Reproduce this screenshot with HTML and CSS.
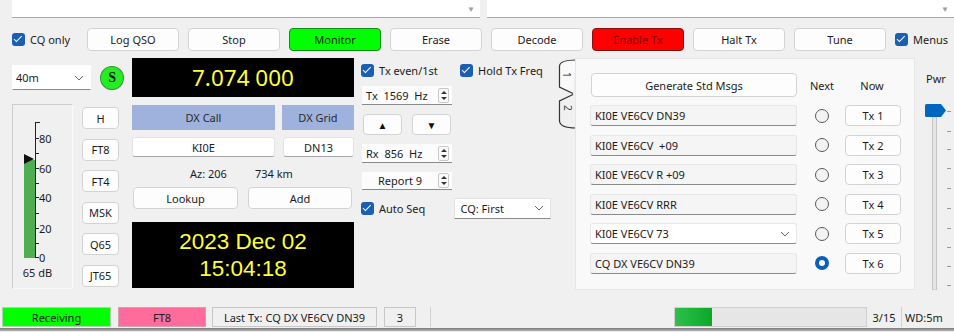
FILE: index.html
```html
<!DOCTYPE html>
<html lang="en">
  <head>
    <meta charset="utf-8" />
    <title>WSJT-X</title>
    <link rel="stylesheet" href="styles.css">
  </head>
  <body>
    <div class="panes">
      <div class="pane pane-left"><span class="scroll-arrow">&#9660;</span></div>
      <div class="pane pane-right"><span class="scroll-arrow">&#9660;</span></div>
    </div>

    <div class="toolbar">
      <label class="check cq-only"><span class="box"></span>CQ only</label>
      <button class="btn">Log QSO</button>
      <button class="btn">Stop</button>
      <button class="btn monitor">Monitor</button>
      <button class="btn">Erase</button>
      <button class="btn">Decode</button>
      <button class="btn enable-tx">Enable Tx</button>
      <button class="btn">Halt Tx</button>
      <button class="btn">Tune</button>
      <label class="check menus"><span class="box"></span>Menus</label>
    </div>

    <div class="main">
      <div class="left">
        <div class="band-row">
          <div class="combo band">40m
            <svg class="chev" width="10" height="6" viewBox="0 0 10 6"><polyline points="1,1 5,5 9,1" fill="none" stroke="#666" stroke-width="1"/></svg>
          </div>
          <div class="s-light">S</div>
        </div>
        <div class="meter-row">
          <div class="meter">
            <svg width="59" height="183" viewBox="0 0 59 183">
              <rect x="11" y="55" width="11" height="98" fill="#4fae52"/>
              <polygon points="11,49 21,54 11,59" fill="#111"/>
              <g stroke="#222" stroke-width="1">
                <line x1="22.5" y1="17" x2="22.5" y2="153"/>
                <line x1="22" y1="17.5" x2="27" y2="17.5"/>
                <line x1="22" y1="33.5" x2="26" y2="33.5"/>
                <line x1="22" y1="48.5" x2="26" y2="48.5"/>
                <line x1="22" y1="63.5" x2="26" y2="63.5"/>
                <line x1="22" y1="78.5" x2="26" y2="78.5"/>
                <line x1="22" y1="92.5" x2="26" y2="92.5"/>
                <line x1="22" y1="108.5" x2="26" y2="108.5"/>
                <line x1="22" y1="123.5" x2="26" y2="123.5"/>
                <line x1="22" y1="138.5" x2="26" y2="138.5"/>
                <line x1="22" y1="152.5" x2="26" y2="152.5"/>
              </g>
              <g class="scale-text">
                <text x="26" y="37.5">80</text>
                <text x="26" y="67.5">60</text>
                <text x="26" y="96.5">40</text>
                <text x="26" y="127.5">20</text>
                <text x="26" y="157">0</text>
                <text x="24.5" y="172" text-anchor="middle">65 dB</text>
              </g>
            </svg>
          </div>
          <div class="modes">
            <button class="btn mode">H</button>
            <button class="btn mode">FT8</button>
            <button class="btn mode">FT4</button>
            <button class="btn mode">MSK</button>
            <button class="btn mode">Q65</button>
            <button class="btn mode">JT65</button>
          </div>
        </div>
      </div>

      <div class="dx">
        <div class="freq">7.074 000</div>
        <div class="dx-head">
          <div class="dx-call">DX Call</div>
          <div class="dx-grid">DX Grid</div>
        </div>
        <div class="dx-vals">
          <div class="entry call">KI0E</div>
          <div class="entry grid">DN13</div>
        </div>
        <div class="azdist"><span>Az: 206</span><span>734 km</span></div>
        <div class="dx-btns">
          <button class="btn lookup">Lookup</button>
          <button class="btn add">Add</button>
        </div>
        <div class="clock">
          <div class="clock-line">2023 Dec 02</div>
          <div class="clock-line">15:04:18</div>
        </div>
      </div>

      <div class="mid">
        <div class="mid-checks">
          <label class="check tx-even"><span class="box"></span>Tx even/1st</label>
          <label class="check"><span class="box"></span>Hold Tx Freq</label>
        </div>
        <div class="spin tx-spin"><span class="spin-text">Tx&nbsp; 1569&nbsp; Hz</span><span class="spin-btn"></span></div>
        <div class="arrows">
          <button class="btn arrow">&#9650;</button>
          <button class="btn arrow">&#9660;</button>
        </div>
        <div class="spin rx-spin"><span class="spin-text">Rx&nbsp; 856&nbsp; Hz</span><span class="spin-btn"></span></div>
        <div class="spin report"><span class="spin-text centered">Report 9</span><span class="spin-btn"></span></div>
        <div class="auto-row">
          <label class="check auto-seq"><span class="box"></span>Auto Seq</label>
          <div class="combo cq-first">CQ: First
            <svg class="chev" width="10" height="6" viewBox="0 0 10 6"><polyline points="1,1 5,5 9,1" fill="none" stroke="#666" stroke-width="1"/></svg>
          </div>
        </div>
      </div>

      <div class="tabs">
        <svg width="20" height="72" viewBox="0 0 20 72">
          <path d="M20,2 Q4,2 3.5,8 L3.5,29 L17,35.5" fill="#f9f9f9" stroke="#333" stroke-width="1.2"/>
          <path d="M17,36.5 L3.5,43 L3.5,63 Q4,70 20,70" fill="none" stroke="#333" stroke-width="1.2"/>
          <text x="7" y="14" transform="rotate(90 7 14)" class="tab-text">1</text>
          <text x="8" y="47" transform="rotate(90 8 47)" class="tab-text dim">2</text>
        </svg>
      </div>

      <div class="panel">
        <div class="msg-head">
          <button class="btn gen">Generate Std Msgs</button>
          <span class="col-next">Next</span>
          <span class="col-now">Now</span>
        </div>
        <div class="msg-row">
          <div class="entry msg">KI0E VE6CV DN39</div>
          <span class="radio"></span>
          <button class="btn tx">Tx 1</button>
        </div>
        <div class="msg-row">
          <div class="entry msg">KI0E VE6CV&nbsp; +09</div>
          <span class="radio"></span>
          <button class="btn tx">Tx 2</button>
        </div>
        <div class="msg-row">
          <div class="entry msg">KI0E VE6CV R +09</div>
          <span class="radio"></span>
          <button class="btn tx">Tx 3</button>
        </div>
        <div class="msg-row">
          <div class="entry msg">KI0E VE6CV RRR</div>
          <span class="radio"></span>
          <button class="btn tx">Tx 4</button>
        </div>
        <div class="msg-row">
          <div class="entry msg msg-combo">KI0E VE6CV 73
            <svg class="chev" width="10" height="6" viewBox="0 0 10 6"><polyline points="1,1 5,5 9,1" fill="none" stroke="#666" stroke-width="1"/></svg>
          </div>
          <span class="radio"></span>
          <button class="btn tx">Tx 5</button>
        </div>
        <div class="msg-row">
          <div class="entry msg">CQ DX VE6CV DN39</div>
          <span class="radio on"></span>
          <button class="btn tx">Tx 6</button>
        </div>
      </div>

      <div class="pwr">
        <span class="pwr-label">Pwr</span>
        <svg width="39" height="204" viewBox="0 0 39 204">
          <rect x="17.5" y="31" width="4" height="173" fill="#e6e6e6" stroke="#c4c4c4" stroke-width="1"/>
          <g stroke="#9a9a9a" stroke-width="1">
            <line x1="32" y1="25.5" x2="36" y2="25.5"/>
            <line x1="32" y1="45.5" x2="36" y2="45.5"/>
            <line x1="32" y1="63.5" x2="36" y2="63.5"/>
            <line x1="32" y1="82.5" x2="36" y2="82.5"/>
            <line x1="32" y1="102.5" x2="36" y2="102.5"/>
            <line x1="32" y1="122.5" x2="36" y2="122.5"/>
            <line x1="32" y1="142.5" x2="36" y2="142.5"/>
            <line x1="32" y1="161.5" x2="36" y2="161.5"/>
            <line x1="32" y1="180.5" x2="36" y2="180.5"/>
            <line x1="32" y1="199.5" x2="36" y2="199.5"/>
          </g>
          <path d="M10,19.5 Q10,18 11.5,18 L26,18 L31,24.5 L26,31 L11.5,31 Q10,31 10,29.5 Z" fill="#0067c0"/>
        </svg>
      </div>
    </div>

    <div class="status">
      <div class="cell receiving">Receiving</div>
      <div class="cell mode-cell">FT8</div>
      <div class="cell sunken last-tx">Last Tx: CQ DX VE6CV DN39</div>
      <div class="cell sunken count">3</div>
      <div class="sep"></div>
      <div class="spacer"></div>
      <div class="progress"><div class="progress-fill"></div></div>
      <div class="cell plain period">3/15</div>
      <div class="sep"></div>
      <div class="cell plain wd">WD:5m</div>
    </div>
    <div class="bottom-line"></div>
  </body>
</html>
```

FILE: styles.css
```css
body {
  margin: 0;
  width: 954px;
  height: 332px;
  overflow: hidden;
  background: #f0f0f0;
  font-family: "Noto Sans", "Open Sans", sans-serif;
  font-size: 11px;
  color: #1b1b1b;
}

button {
  font-family: inherit;
  font-size: 11px;
  color: #1b1b1b;
  padding: 0;
}

/* top decode panes */
.panes {
  display: flex;
  height: 18px;
  padding-left: 12px;
  gap: 7px;
}

.pane {
  display: flex;
  justify-content: flex-end;
  align-items: center;
  background: #fff;
  border-bottom: 1px solid #a8a8a8;
  box-sizing: border-box;
}

.pane-left {
  width: 468px;
}

.pane-right {
  flex: 1;
}

.scroll-arrow {
  font-size: 8px;
  color: #a0a0a0;
  padding-right: 5px;
}

/* generic widgets */
.btn {
  background: #fdfdfd;
  border: 1px solid #d3d3d3;
  border-radius: 4px;
  box-sizing: border-box;
}

.check {
  display: flex;
  align-items: center;
  gap: 5px;
  white-space: nowrap;
}

.box {
  position: relative;
  width: 13px;
  height: 13px;
  border-radius: 3px;
  background: #1a5fb4;
  flex: none;
}

.box::after {
  content: "";
  position: absolute;
  left: 4px;
  top: 1.5px;
  width: 3px;
  height: 6.5px;
  border: solid #fff;
  border-width: 0 1.5px 1.5px 0;
  transform: rotate(45deg);
}

.combo {
  display: flex;
  align-items: center;
  justify-content: space-between;
  background: #fff;
  border: 1px solid #e2e2e2;
  border-bottom-color: #8a8a8a;
  box-sizing: border-box;
  padding: 0 6px 0 4px;
}

.entry {
  display: flex;
  align-items: center;
  background: #fff;
  border: 1px solid #e4e4e4;
  border-bottom-color: #a8a8a8;
  border-radius: 3px;
  box-sizing: border-box;
}

/* toolbar */
.toolbar {
  display: flex;
  align-items: center;
  height: 24px;
  margin-top: 9px;
  padding-left: 12px;
  gap: 9px;
}

.cq-only {
  width: 66px;
}

.toolbar .btn {
  width: 92px;
  height: 23px;
}

.toolbar .monitor {
  background: #00ff00;
  border-color: #188a18;
}

.toolbar .enable-tx {
  background: #ff0000;
  border-color: #8a1010;
  color: #8a0000;
}

/* main area */
.main {
  display: flex;
  align-items: flex-start;
  height: 232px;
  margin-top: 7px;
  padding-left: 12px;
}

.left {
  width: 112px;
  margin-right: 8px;
}

.band-row {
  display: flex;
  align-items: center;
  margin-top: 7px;
  height: 25px;
}

.band {
  width: 80px;
  height: 25px;
  border-color: #fff;
  border-bottom-color: #8a8a8a;
  padding-left: 3px;
}

.s-light {
  display: flex;
  align-items: center;
  justify-content: center;
  width: 24px;
  height: 24px;
  margin-left: 9px;
  border-radius: 50%;
  background: #22ee22;
  border: 1px solid #3b8f3b;
  box-sizing: border-box;
  font-family: "Liberation Serif", serif;
  font-weight: bold;
  font-size: 14px;
  color: #111;
}

.meter-row {
  display: flex;
  margin-top: 14px;
}

.meter {
  width: 61px;
  height: 185px;
  border: 1px solid #cdcdcd;
  border-right-color: #fafafa;
  border-bottom-color: #fafafa;
  box-sizing: border-box;
}

.meter svg {
  display: block;
}

.scale-text text {
  font-family: "Noto Sans", sans-serif;
  font-size: 11px;
  fill: #1b1b1b;
}

.modes {
  display: flex;
  flex-direction: column;
  gap: 9.6px;
  margin-left: 9px;
  margin-top: 3px;
}

.mode {
  width: 37px;
  height: 22px;
}

/* dx column */
.dx {
  display: flex;
  flex-direction: column;
  width: 222px;
  margin-right: 7px;
}

.freq {
  display: flex;
  align-items: center;
  justify-content: center;
  height: 39px;
  background: #000;
  color: #ffff3c;
  font-size: 22.5px;
}

.dx-head {
  display: flex;
  gap: 7px;
  margin-top: 8px;
  height: 25px;
}

.dx-head div {
  display: flex;
  align-items: center;
  justify-content: center;
  background: #9fb2dd;
  color: #2a2a2a;
}

.dx-call {
  width: 143px;
}

.dx-grid {
  flex: 1;
}

.dx-vals {
  display: flex;
  gap: 8px;
  margin-top: 7px;
  height: 20px;
}

.dx-vals .entry {
  justify-content: center;
}

.call {
  width: 143px;
}

.grid {
  flex: 1;
}

.azdist {
  display: flex;
  gap: 28px;
  height: 16px;
  margin-top: 8px;
  padding-left: 58px;
  align-items: center;
}

.dx-btns {
  display: flex;
  gap: 10px;
  margin-top: 6px;
  margin-left: 1px;
  height: 22px;
}

.lookup {
  width: 105px;
}

.add {
  width: 104px;
}

.clock {
  display: flex;
  flex-direction: column;
  align-items: center;
  height: 66px;
  margin-top: 13px;
  padding-top: 6px;
  background: #000;
  color: #ffff3c;
  font-family: "Liberation Sans", sans-serif;
  font-size: 22.5px;
  box-sizing: border-box;
}

.clock-line {
  height: 27px;
  line-height: 27px;
}

/* middle controls */
.mid {
  display: flex;
  flex-direction: column;
  width: 190px;
  margin-right: 5px;
}

.mid-checks {
  display: flex;
  margin-top: 5px;
  height: 14px;
}

.tx-even {
  width: 99px;
}

.spin {
  display: flex;
  align-items: center;
  width: 90px;
  height: 19px;
  margin-left: 1px;
  background: #fcfcfc;
  border-bottom: 1px solid #8a8a8a;
  box-sizing: border-box;
}

.spin-text {
  flex: 1;
  padding-left: 4px;
}

.spin-text.centered {
  text-align: center;
  padding-left: 0;
}

.spin-btn {
  position: relative;
  width: 11px;
  height: 15px;
  margin-right: 3px;
  border: 1px solid #c8c8c8;
  border-radius: 2px;
  box-sizing: border-box;
  background: #fafafa;
}

.spin-btn::before,
.spin-btn::after {
  content: "";
  position: absolute;
  left: 2px;
  border-left: 3px solid transparent;
  border-right: 3px solid transparent;
}

.spin-btn::before {
  top: 2px;
  border-bottom: 3px solid #333;
}

.spin-btn::after {
  bottom: 2px;
  border-top: 3px solid #333;
}

.tx-spin {
  margin-top: 9px;
}

.arrows {
  display: flex;
  gap: 10px;
  margin-top: 9px;
  margin-left: 2px;
}

.arrow {
  width: 39px;
  height: 21px;
  font-size: 10px;
  color: #111;
}

.rx-spin {
  margin-top: 9px;
}

.report {
  margin-top: 9px;
  height: 18px;
}

.auto-row {
  display: flex;
  align-items: center;
  margin-top: 7px;
  height: 22px;
}

.auto-seq {
  width: 94px;
}

.cq-first {
  width: 97px;
  height: 21px;
  padding-left: 5px;
}

/* tab widget */
.tabs {
  width: 19px;
}

.tabs svg {
  display: block;
}

.tab-text {
  font-family: "Noto Sans", sans-serif;
  font-size: 10px;
  fill: #222;
}

.tab-text.dim {
  fill: #444;
}

.panel {
  width: 340px;
  height: 232px;
  background: #f9f9f9;
  border: 1px solid #e6e6e6;
  box-sizing: border-box;
  padding: 14px 0 0 14px;
}

.msg-head {
  display: flex;
  align-items: center;
  height: 24px;
  margin-left: 1px;
}

.gen {
  width: 206px;
  height: 24px;
}

.col-next {
  width: 50px;
  text-align: center;
}

.col-now {
  width: 50px;
  text-align: center;
}

.msg-row {
  display: flex;
  align-items: center;
  height: 21px;
  margin-top: 8.6px;
}

.msg-head + .msg-row {
  margin-top: 8px;
}

.msg {
  width: 207px;
  height: 21px;
  background: #f5f5f5;
  border-radius: 3px;
  border-color: #e6e6e6;
  border-bottom-color: #8a8a8a;
  padding-left: 4px;
}

.msg-combo {
  background: #fff;
  justify-content: space-between;
  padding-right: 6px;
}

.radio {
  width: 14px;
  height: 14px;
  margin-left: 18px;
  border-radius: 50%;
  border: 1px solid #5a5a5a;
  background: #f3f3f3;
  box-sizing: border-box;
}

.radio.on {
  border: 4px solid #0a5fb6;
  background: #fff;
}

.tx {
  width: 56px;
  height: 21px;
  margin-left: 16px;
}

/* power slider */
.pwr {
  display: flex;
  flex-direction: column;
  width: 39px;
}

.pwr-label {
  margin-top: 14px;
  padding-left: 11px;
  height: 14px;
  line-height: 14px;
}

.pwr svg {
  display: block;
}

/* status bar */
.status {
  display: flex;
  align-items: center;
  height: 20px;
  margin-top: 17px;
  padding-left: 2px;
}

.cell {
  display: flex;
  align-items: center;
  justify-content: center;
  height: 20px;
  box-sizing: border-box;
  border: 1px solid #c8c8c8;
}

.receiving {
  width: 109px;
  background: #00ff00;
  border-color: #b0d0b0;
}

.mode-cell {
  width: 88px;
  margin-left: 7px;
  background: #ff6c9c;
  border-color: #d0a0b0;
}

.last-tx {
  width: 165px;
  margin-left: 6px;
}

.count {
  width: 32px;
  margin-left: 7px;
}

.sep {
  width: 1px;
  height: 20px;
  background: #d2d2d2;
  margin-left: 14px;
}

.spacer {
  flex: 1;
}

.progress {
  width: 193px;
  height: 20px;
  background: #e6e6e6;
  border: 1px solid #cfcfcf;
  box-sizing: border-box;
}

.progress-fill {
  width: 37px;
  height: 100%;
  background: linear-gradient(to right, #2ec04a, #0ca82a);
}

.plain {
  border: none;
}

.period {
  width: 34px;
}

.status .period + .sep {
  margin-left: 0;
}

.wd {
  width: 44px;
  margin-right: 8px;
}

.bottom-line {
  height: 3px;
  margin-top: 1px;
  background: linear-gradient(#7a7a7a, #b0b0b0);
}
```
